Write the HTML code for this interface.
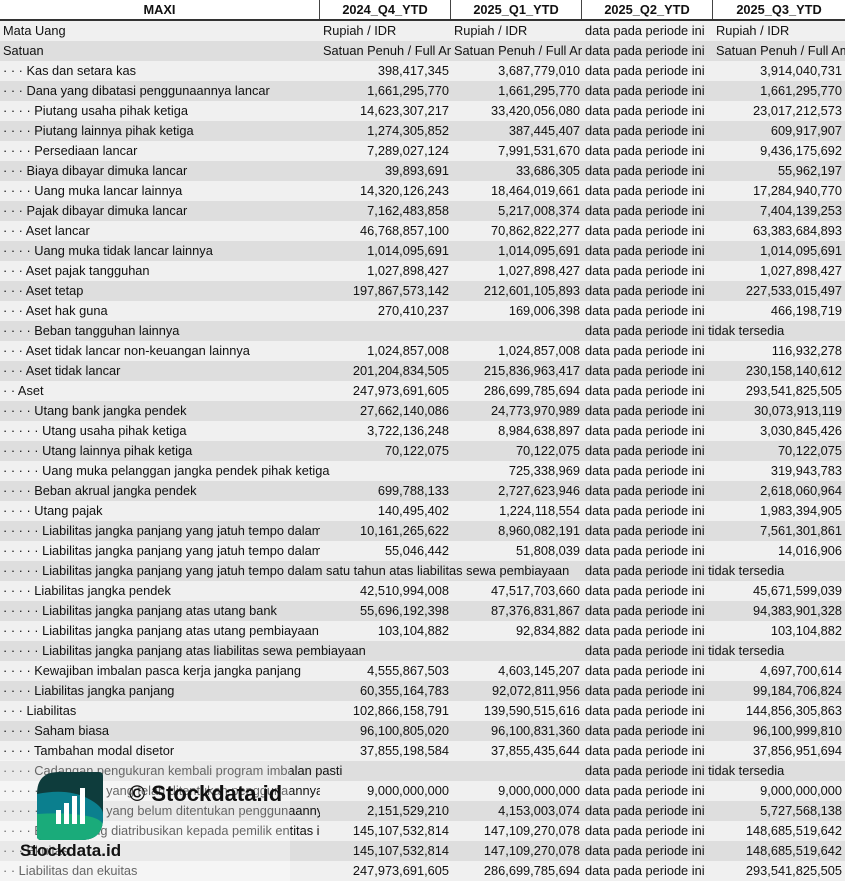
<!DOCTYPE html>
<html><head><meta charset="utf-8"><style>
*{margin:0;padding:0;box-sizing:border-box}
body{width:845px;height:881px;overflow:hidden;background:#f0f0f0;font-family:"Liberation Sans",sans-serif;font-size:12.8px;color:#111;position:relative}
.h{position:relative;height:21px;background:#fff;border-bottom:2px solid #333;font-weight:bold}
.h span{position:absolute;top:0;line-height:19px;text-align:center;border-right:1px solid #444;height:19px}
.r{position:relative;height:20px}
.r:nth-child(odd){background:#f0f0f0}
.r:nth-child(even){background:#dedede}
.r span{position:absolute;top:0;line-height:20px;white-space:nowrap;overflow:hidden}
.l{left:3px;width:317px}
.o{left:3px;width:auto;overflow:visible!important}
.w{left:3px;width:579px}
.a{left:320px;width:129px;text-align:right}
.b{left:451px;width:129px;text-align:right}
.c{left:585px;width:127px}
.e{left:713px;width:129px;text-align:right}
.ta{left:323px;width:128px}.tb{left:454px;width:128px}.te{left:716px;width:129px}
.na{left:585px;width:260px}
.ov{position:absolute;left:0;top:760px;width:290px;height:121px;background:rgba(255,255,255,.35)}
</style></head><body>
<div class="h"><span style="left:0;width:320px">MAXI</span><span style="left:320px;width:131px">2024_Q4_YTD</span><span style="left:451px;width:131px">2025_Q1_YTD</span><span style="left:582px;width:131px">2025_Q2_YTD</span><span style="left:713px;width:132px;border:none">2025_Q3_YTD</span></div>
<div id="t">
<div class="r"><span class="l">Mata Uang</span><span class="ta">Rupiah / IDR</span><span class="tb">Rupiah / IDR</span><span class="c">data pada periode ini</span><span class="te">Rupiah / IDR</span></div>
<div class="r"><span class="l">Satuan</span><span class="ta">Satuan Penuh / Full Amount</span><span class="tb">Satuan Penuh / Full Amount</span><span class="c">data pada periode ini</span><span class="te">Satuan Penuh / Full Amount</span></div>
<div class="r"><span class="l">· · · Kas dan setara kas</span><span class="a">398,417,345</span><span class="b">3,687,779,010</span><span class="c">data pada periode ini</span><span class="e">3,914,040,731</span></div>
<div class="r"><span class="l">· · · Dana yang dibatasi penggunaannya lancar</span><span class="a">1,661,295,770</span><span class="b">1,661,295,770</span><span class="c">data pada periode ini</span><span class="e">1,661,295,770</span></div>
<div class="r"><span class="l">· · · · Piutang usaha pihak ketiga</span><span class="a">14,623,307,217</span><span class="b">33,420,056,080</span><span class="c">data pada periode ini</span><span class="e">23,017,212,573</span></div>
<div class="r"><span class="l">· · · · Piutang lainnya pihak ketiga</span><span class="a">1,274,305,852</span><span class="b">387,445,407</span><span class="c">data pada periode ini</span><span class="e">609,917,907</span></div>
<div class="r"><span class="l">· · · · Persediaan lancar</span><span class="a">7,289,027,124</span><span class="b">7,991,531,670</span><span class="c">data pada periode ini</span><span class="e">9,436,175,692</span></div>
<div class="r"><span class="l">· · · Biaya dibayar dimuka lancar</span><span class="a">39,893,691</span><span class="b">33,686,305</span><span class="c">data pada periode ini</span><span class="e">55,962,197</span></div>
<div class="r"><span class="l">· · · · Uang muka lancar lainnya</span><span class="a">14,320,126,243</span><span class="b">18,464,019,661</span><span class="c">data pada periode ini</span><span class="e">17,284,940,770</span></div>
<div class="r"><span class="l">· · · Pajak dibayar dimuka lancar</span><span class="a">7,162,483,858</span><span class="b">5,217,008,374</span><span class="c">data pada periode ini</span><span class="e">7,404,139,253</span></div>
<div class="r"><span class="l">· · · Aset lancar</span><span class="a">46,768,857,100</span><span class="b">70,862,822,277</span><span class="c">data pada periode ini</span><span class="e">63,383,684,893</span></div>
<div class="r"><span class="l">· · · · Uang muka tidak lancar lainnya</span><span class="a">1,014,095,691</span><span class="b">1,014,095,691</span><span class="c">data pada periode ini</span><span class="e">1,014,095,691</span></div>
<div class="r"><span class="l">· · · Aset pajak tangguhan</span><span class="a">1,027,898,427</span><span class="b">1,027,898,427</span><span class="c">data pada periode ini</span><span class="e">1,027,898,427</span></div>
<div class="r"><span class="l">· · · Aset tetap</span><span class="a">197,867,573,142</span><span class="b">212,601,105,893</span><span class="c">data pada periode ini</span><span class="e">227,533,015,497</span></div>
<div class="r"><span class="l">· · · Aset hak guna</span><span class="a">270,410,237</span><span class="b">169,006,398</span><span class="c">data pada periode ini</span><span class="e">466,198,719</span></div>
<div class="r"><span class="l">· · · · Beban tangguhan lainnya</span><span class="na">data pada periode ini tidak tersedia</span></div>
<div class="r"><span class="l">· · · Aset tidak lancar non-keuangan lainnya</span><span class="a">1,024,857,008</span><span class="b">1,024,857,008</span><span class="c">data pada periode ini</span><span class="e">116,932,278</span></div>
<div class="r"><span class="l">· · · Aset tidak lancar</span><span class="a">201,204,834,505</span><span class="b">215,836,963,417</span><span class="c">data pada periode ini</span><span class="e">230,158,140,612</span></div>
<div class="r"><span class="l">· · Aset</span><span class="a">247,973,691,605</span><span class="b">286,699,785,694</span><span class="c">data pada periode ini</span><span class="e">293,541,825,505</span></div>
<div class="r"><span class="l">· · · · Utang bank jangka pendek</span><span class="a">27,662,140,086</span><span class="b">24,773,970,989</span><span class="c">data pada periode ini</span><span class="e">30,073,913,119</span></div>
<div class="r"><span class="l">· · · · · Utang usaha pihak ketiga</span><span class="a">3,722,136,248</span><span class="b">8,984,638,897</span><span class="c">data pada periode ini</span><span class="e">3,030,845,426</span></div>
<div class="r"><span class="l">· · · · · Utang lainnya pihak ketiga</span><span class="a">70,122,075</span><span class="b">70,122,075</span><span class="c">data pada periode ini</span><span class="e">70,122,075</span></div>
<div class="r"><span class="l o">· · · · · Uang muka pelanggan jangka pendek pihak ketiga</span><span class="b">725,338,969</span><span class="c">data pada periode ini</span><span class="e">319,943,783</span></div>
<div class="r"><span class="l">· · · · Beban akrual jangka pendek</span><span class="a">699,788,133</span><span class="b">2,727,623,946</span><span class="c">data pada periode ini</span><span class="e">2,618,060,964</span></div>
<div class="r"><span class="l">· · · · Utang pajak</span><span class="a">140,495,402</span><span class="b">1,224,118,554</span><span class="c">data pada periode ini</span><span class="e">1,983,394,905</span></div>
<div class="r"><span class="l">· · · · · Liabilitas jangka panjang yang jatuh tempo dalam satu tahun</span><span class="a">10,161,265,622</span><span class="b">8,960,082,191</span><span class="c">data pada periode ini</span><span class="e">7,561,301,861</span></div>
<div class="r"><span class="l">· · · · · Liabilitas jangka panjang yang jatuh tempo dalam satu tahun</span><span class="a">55,046,442</span><span class="b">51,808,039</span><span class="c">data pada periode ini</span><span class="e">14,016,906</span></div>
<div class="r"><span class="w">· · · · · Liabilitas jangka panjang yang jatuh tempo dalam satu tahun atas liabilitas sewa pembiayaan</span><span class="na">data pada periode ini tidak tersedia</span></div>
<div class="r"><span class="l">· · · · Liabilitas jangka pendek</span><span class="a">42,510,994,008</span><span class="b">47,517,703,660</span><span class="c">data pada periode ini</span><span class="e">45,671,599,039</span></div>
<div class="r"><span class="l">· · · · · Liabilitas jangka panjang atas utang bank</span><span class="a">55,696,192,398</span><span class="b">87,376,831,867</span><span class="c">data pada periode ini</span><span class="e">94,383,901,328</span></div>
<div class="r"><span class="l">· · · · · Liabilitas jangka panjang atas utang pembiayaan</span><span class="a">103,104,882</span><span class="b">92,834,882</span><span class="c">data pada periode ini</span><span class="e">103,104,882</span></div>
<div class="r"><span class="l o">· · · · · Liabilitas jangka panjang atas liabilitas sewa pembiayaan</span><span class="na">data pada periode ini tidak tersedia</span></div>
<div class="r"><span class="l">· · · · Kewajiban imbalan pasca kerja jangka panjang</span><span class="a">4,555,867,503</span><span class="b">4,603,145,207</span><span class="c">data pada periode ini</span><span class="e">4,697,700,614</span></div>
<div class="r"><span class="l">· · · · Liabilitas jangka panjang</span><span class="a">60,355,164,783</span><span class="b">92,072,811,956</span><span class="c">data pada periode ini</span><span class="e">99,184,706,824</span></div>
<div class="r"><span class="l">· · · Liabilitas</span><span class="a">102,866,158,791</span><span class="b">139,590,515,616</span><span class="c">data pada periode ini</span><span class="e">144,856,305,863</span></div>
<div class="r"><span class="l">· · · · Saham biasa</span><span class="a">96,100,805,020</span><span class="b">96,100,831,360</span><span class="c">data pada periode ini</span><span class="e">96,100,999,810</span></div>
<div class="r"><span class="l">· · · · Tambahan modal disetor</span><span class="a">37,855,198,584</span><span class="b">37,855,435,644</span><span class="c">data pada periode ini</span><span class="e">37,856,951,694</span></div>
<div class="r"><span class="l o">· · · · Cadangan pengukuran kembali program imbalan pasti</span><span class="na">data pada periode ini tidak tersedia</span></div>
<div class="r"><span class="l">· · · · · Saldo laba yang telah ditentukan penggunaannya</span><span class="a">9,000,000,000</span><span class="b">9,000,000,000</span><span class="c">data pada periode ini</span><span class="e">9,000,000,000</span></div>
<div class="r"><span class="l">· · · · · Saldo laba yang belum ditentukan penggunaannya</span><span class="a">2,151,529,210</span><span class="b">4,153,003,074</span><span class="c">data pada periode ini</span><span class="e">5,727,568,138</span></div>
<div class="r"><span class="l">· · · · Ekuitas yang diatribusikan kepada pemilik entitas induk</span><span class="a">145,107,532,814</span><span class="b">147,109,270,078</span><span class="c">data pada periode ini</span><span class="e">148,685,519,642</span></div>
<div class="r"><span class="l">· · · Ekuitas</span><span class="a">145,107,532,814</span><span class="b">147,109,270,078</span><span class="c">data pada periode ini</span><span class="e">148,685,519,642</span></div>
<div class="r"><span class="l">· · Liabilitas dan ekuitas</span><span class="a">247,973,691,605</span><span class="b">286,699,785,694</span><span class="c">data pada periode ini</span><span class="e">293,541,825,505</span></div>
</div>
<div class="ov"></div>
<svg style="position:absolute;left:37px;top:772px" width="66" height="68" viewBox="0 0 66 68">
<defs><clipPath id="k"><path d="M22 0H62Q66 0 66 4V46Q66 68 44 68H4Q0 68 0 64V22Q0 0 22 0Z"/></clipPath></defs>
<g clip-path="url(#k)">
<rect width="66" height="68" fill="#0e3c3c"/>
<path d="M0 22Q30 16 50 26Q66 34 66 42V68H0Z" fill="#0b7f8e"/>
<path d="M0 42Q30 40 50 44Q62 46 66 52V68H0Z" fill="#1aab7a"/>
</g>
<rect x="19" y="38" width="5" height="14" fill="#fff"/><rect x="27" y="31" width="5" height="21" fill="#fff"/><rect x="35" y="24" width="5" height="28" fill="#fff"/><rect x="43" y="16" width="5" height="36" fill="#fff"/>
</svg>
<div style="position:absolute;left:129px;top:780px;font-size:22px;font-weight:bold;color:#111;line-height:28px">© Stockdata.id</div>
<div style="position:absolute;left:20px;top:840px;font-size:17px;font-weight:bold;color:#111;line-height:22px">Stockdata.id</div>
</body></html>
